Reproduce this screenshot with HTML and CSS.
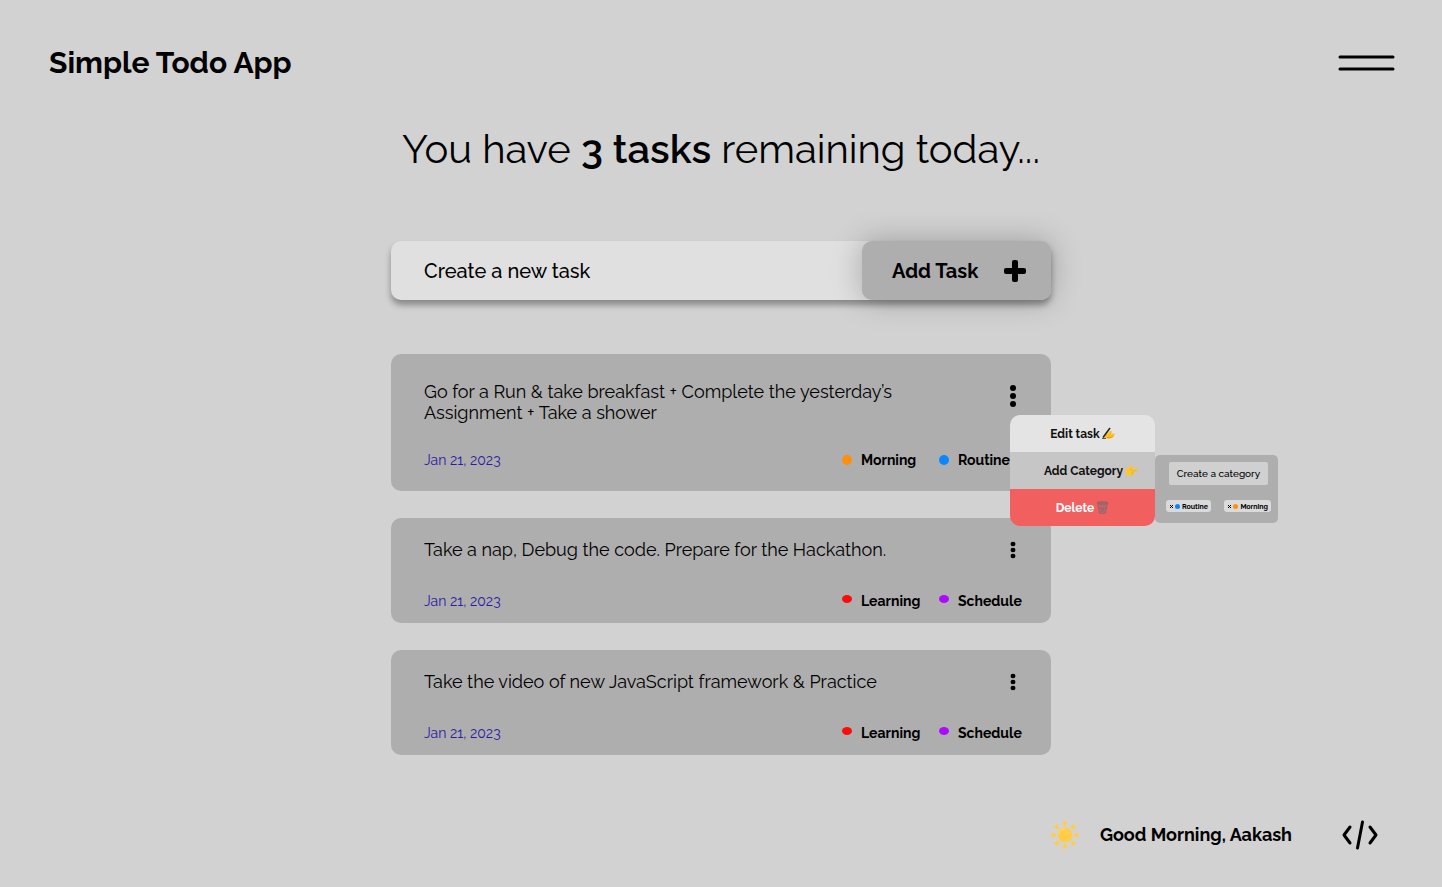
FILE: index.html
```html
<!DOCTYPE html>
<html lang="en">
<head>
<meta charset="utf-8">
<meta name="viewport" content="width=device-width, initial-scale=1">
<title>Simple Todo App</title>
<link rel="stylesheet" href="styles.css">
</head>
<body>
<div class="page">
  <header class="header">
    <h1 class="brand">Simple Todo App</h1>
    <button class="icon-button" type="button" aria-label="Open menu">
      <svg width="57" height="18" viewBox="0 0 57 18" fill="none" stroke="#000" stroke-width="3" stroke-linecap="round"><path d="M2 3h53M2 15h53"/></svg>
    </button>
  </header>

  <main class="main">
    <h2 class="summary">You have <strong>3 tasks</strong> remaining today...</h2>

    <form class="new-task">
      <input class="new-task-input" type="text" placeholder="Create a new task" aria-label="Create a new task">
      <button class="new-task-button" type="button">Add Task
        <svg width="22" height="22" viewBox="0 0 22 22" aria-hidden="true"><rect x="8" width="6" height="22" rx="2"/><rect y="8" width="22" height="6" rx="2"/></svg>
      </button>
    </form>

    <ul class="tasks">
      <li class="task task-tall">
        <div class="task-top">
          <p class="task-text">Go for a Run &amp; take breakfast + Complete the yesterday’s Assignment + Take a shower</p>
          <button class="icon-button" type="button" aria-label="Task options" aria-expanded="true">
            <svg width="6" height="22" viewBox="0 0 6 22"><circle cx="3" cy="3" r="3"/><circle cx="3" cy="11" r="3"/><circle cx="3" cy="19" r="3"/></svg>
          </button>
        </div>
        <div class="task-bottom">
          <time class="date" datetime="2023-01-21">Jan 21, 2023</time>
          <div class="tags"><span class="tag"><i class="dot orange"></i>Morning</span><span class="tag"><i class="dot blue"></i>Routine</span></div>
        </div>
        <div class="popover">
          <div class="menu">
            <button class="menu-item edit" type="button">Edit task
              <svg width="13" height="13" viewBox="0 0 26 26" aria-hidden="true"><path d="M4 17l7-4 5-5q4-1 4 2l-2 4 6-1q3 1 0 4l-4 4q-4 3-10 2l-7-2z" fill="#fdbe22"/><path d="M10 21q6 2 13-2" fill="none" stroke="#e58e00" stroke-width="1.500"/><path d="M2 21L16 2" stroke="#222" stroke-width="3"/><path d="M0 23h8" stroke="#222" stroke-width="1.500"/></svg>
            </button>
            <button class="menu-item add" type="button">Add Category
              <svg width="14" height="13" viewBox="0 0 28 26" aria-hidden="true"><path d="M1 9q5 0 8-3l4-3q4 0 2 4l-2 2h12q3 2 0 4h-7q2 2-1 4 2 2-1 4 0 2-3 2H8q-4 0-7-3z" fill="#fdc52e"/><path d="M14 9q-3 1-4 4M14 13.500h10M13 17.500h5M12 21h4" fill="none" stroke="#e3a12a" stroke-width="1"/></svg>
            </button>
            <button class="menu-item delete" type="button">Delete
              <svg width="13" height="13" viewBox="0 0 26 26" aria-hidden="true"><g fill="none" stroke="#81686e" stroke-width="1.500"><path d="M3 4l4 20q6 3 12 0l4-20z" fill="#c9646a"/><ellipse cx="13" cy="4" rx="11" ry="2.500" fill="#a9666b"/><path d="M8 7l10 16M18 7L8 23M5 10l12 14M21 10L9 24M5 15h16" stroke-width="1"/></g></svg>
            </button>
          </div>
          <div class="category">
            <input class="category-input" type="text" placeholder="Create a category" aria-label="Create a category">
            <div class="chips">
              <button class="chip" type="button"><svg width="3" height="3" viewBox="0 0 3 3"><path d="M0 0l3 3M3 0L0 3" stroke="#000"/></svg><i class="mini-dot blue"></i>Routine</button>
              <button class="chip" type="button"><svg width="3" height="3" viewBox="0 0 3 3"><path d="M0 0l3 3M3 0L0 3" stroke="#000"/></svg><i class="mini-dot orange"></i>Morning</button>
            </div>
          </div>
        </div>
      </li>
      <li class="task">
        <div class="task-top">
          <p class="task-text">Take a nap, Debug the code. Prepare for the Hackathon.</p>
          <button class="icon-button" type="button" aria-label="Task options"><svg width="6" height="18" viewBox="0 0 6 18"><ellipse cx="3" cy="3" rx="2.500" ry="2.300"/><ellipse cx="3" cy="9" rx="2.500" ry="2.300"/><ellipse cx="3" cy="15" rx="2.500" ry="2.300"/></svg></button>
        </div>
        <div class="task-bottom">
          <time class="date" datetime="2023-01-21">Jan 21, 2023</time>
          <div class="tags"><span class="tag"><i class="dot flat red"></i>Learning</span><span class="tag"><i class="dot flat purple"></i>Schedule</span></div>
        </div>
      </li>
      <li class="task">
        <div class="task-top">
          <p class="task-text">Take the video of new JavaScript framework &amp; Practice</p>
          <button class="icon-button" type="button" aria-label="Task options"><svg width="6" height="18" viewBox="0 0 6 18"><ellipse cx="3" cy="3" rx="2.500" ry="2.300"/><ellipse cx="3" cy="9" rx="2.500" ry="2.300"/><ellipse cx="3" cy="15" rx="2.500" ry="2.300"/></svg></button>
        </div>
        <div class="task-bottom">
          <time class="date" datetime="2023-01-21">Jan 21, 2023</time>
          <div class="tags"><span class="tag"><i class="dot flat red"></i>Learning</span><span class="tag"><i class="dot flat purple"></i>Schedule</span></div>
        </div>
      </li>
    </ul>
  </main>

  <footer class="footer">
    <svg width="28" height="28" viewBox="0 0 28 28" fill="#ffcd4a" aria-hidden="true"><circle cx="14" cy="14" r="7.500"/><path id="ray" d="M11.500 .5h5l-1.500 4.500h-2z"/><use href="#ray" transform="rotate(45 14 14)"/><use href="#ray" transform="rotate(90 14 14)"/><use href="#ray" transform="rotate(135 14 14)"/><use href="#ray" transform="rotate(180 14 14)"/><use href="#ray" transform="rotate(225 14 14)"/><use href="#ray" transform="rotate(270 14 14)"/><use href="#ray" transform="rotate(315 14 14)"/><path d="M8 13q1-5 6-5" fill="none" stroke="#ffdc70"/></svg>
    <p class="greeting">Good Morning, Aakash</p>
    <a class="code-link" href="#" aria-label="Source code"><svg width="36" height="30" viewBox="0 0 36 30" fill="none" stroke="#000" stroke-width="3" stroke-linecap="round" stroke-linejoin="round"><path d="M8 7l-6 8 6 8M28 7l6 8-6 8M20.500 2l-5 26"/></svg></a>
  </footer>
</div>
</body>
</html>
```
FILE: styles.css
```css
* { box-sizing: border-box; }

body {
  margin: 0;
  background: #d2d2d2;
  color: #000;
  font-family: Raleway, Lato, sans-serif;
}

h1, h2, p, ul { margin: 0; padding: 0; }
button, input { font: inherit; color: inherit; border: 0; }
svg { display: block; flex: none; }
input::placeholder { color: inherit; opacity: 1; }

.page {
  display: flex;
  flex-direction: column;
  min-height: 100vh;
}

.header {
  display: flex;
  align-items: center;
  justify-content: space-between;
  padding: 44px 47px 0 49px;
}

.brand { font-size: 30px; line-height: 38px; font-weight: 700; }
.icon-button { padding: 0; background: none; cursor: pointer; }

.main {
  width: 100%;
  max-width: 660px;
  margin: 0 auto;
  padding-top: 42px;
}

.summary {
  font-size: 40px;
  line-height: 50px;
  font-weight: 400;
  text-align: center;
  white-space: nowrap;
}
.summary strong { font-weight: 600; }

.new-task {
  display: flex;
  margin-top: 67px;
  border-radius: 10px;
  background: #e0e0e0;
  box-shadow: 0 5px 6px rgba(0, 0, 0, 0.35);
}
.new-task-input {
  flex: 1;
  min-width: 0;
  padding: 0 33px;
  background: none;
  border-radius: 10px;
  font-size: 20px;
  font-weight: 500;
}
.new-task-button {
  display: flex;
  align-items: center;
  justify-content: space-between;
  width: 189px;
  height: 59px;
  padding: 0 25px 0 30px;
  border-radius: 10px;
  background: #aeaeae;
  box-shadow: 0 0 30px rgba(0, 0, 0, 0.25);
  font-size: 20px;
  font-weight: 700;
}

.tasks {
  display: grid;
  gap: 27px;
  margin-top: 54px;
  list-style: none;
}
.task {
  position: relative;
  padding: 21px 29px 11px 33px;
  border-radius: 10px;
  background: #aeaeae;
}
.task-tall { padding: 27px 29px 20px 33px; }
.task-top {
  display: flex;
  align-items: center;
  justify-content: space-between;
  padding-right: 6px;
}
.task-tall .task-top { align-items: flex-start; }
.task-tall .icon-button { padding-top: 4px; }
.task-text { max-width: 500px; font-size: 18px; line-height: 21px; }
.task-bottom {
  display: flex;
  align-items: center;
  justify-content: space-between;
  margin-top: 30px;
  font-size: 14px;
  line-height: 22px;
}
.task-tall .task-bottom { margin-top: 26px; }
.date { color: #2a1aa5; }
.tags { display: grid; grid-template-columns: 97px 83px; }
.tag { display: flex; align-items: center; gap: 9px; font-weight: 700; }

.dot { flex: none; width: 10px; height: 10px; border-radius: 50%; }
.dot.flat { height: 8px; margin-bottom: 4px; }
.mini-dot { flex: none; width: 5px; height: 5px; border-radius: 50%; }
.orange { background: #ff8f0c; }
.blue { background: #0a87ff; }
.red { background: #ff0a0a; }
.purple { background: #ad0aff; }

.popover {
  position: absolute;
  z-index: 1;
  top: 61px;
  left: 619px;
  display: flex;
  align-items: flex-start;
}
.menu {
  width: 145px;
  border-radius: 10px;
  overflow: hidden;
}
.menu-item {
  display: flex;
  align-items: center;
  justify-content: center;
  gap: 2px;
  width: 100%;
  height: 37px;
  padding: 0;
  font-size: 12px;
  font-weight: 700;
  color: #111;
}
.menu-item.edit { background: #e4e4e4; }
.menu-item.add { padding-left: 18px; background: #c6c6c6; }
.menu-item.delete { background: #f15f5f; color: #fff; }

.category {
  width: 123px;
  margin-top: 40px;
  padding: 7px 7px 11px 11px;
  border-radius: 5px;
  background: #aeaeae;
}
.category-input {
  display: block;
  width: 99px;
  height: 23px;
  margin: 0 auto;
  padding: 0;
  border-radius: 2px;
  background: #d0d0d0;
  font-size: 10px;
  font-weight: 500;
  text-align: center;
}
.chips { display: flex; justify-content: space-between; margin-top: 15px; }
.chip {
  display: flex;
  align-items: center;
  gap: 2px;
  height: 12px;
  padding: 0 3px 0 4px;
  border-radius: 3px;
  background: #dadada;
  font-size: 7px;
  font-weight: 700;
}

.footer {
  display: flex;
  align-items: center;
  justify-content: flex-end;
  margin-top: auto;
  padding: 24px 64px 37px;
}
.greeting { margin: 0 50px 0 21px; font-size: 18px; line-height: 24px; font-weight: 700; }
.code-link { display: block; }
```
